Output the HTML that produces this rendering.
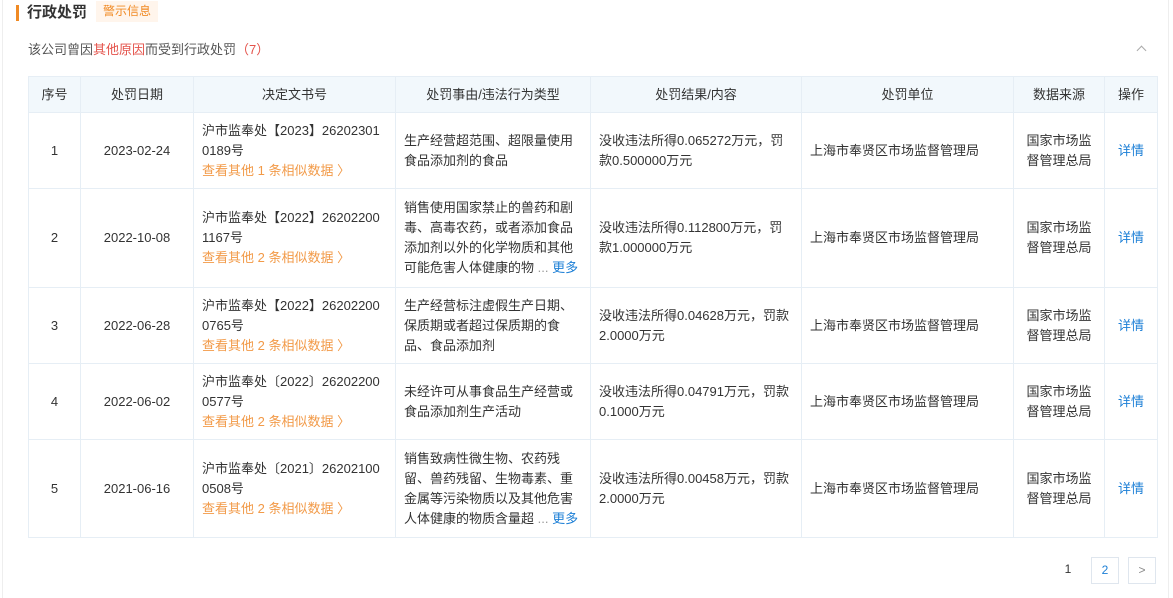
<!DOCTYPE html>
<html><head><meta charset="utf-8">
<style>
*{margin:0;padding:0;box-sizing:border-box}
body{width:1173px;height:592px;overflow:hidden;background:#fff;font-family:"Liberation Sans","Noto Sans CJK SC",sans-serif;font-size:13px;color:#333;position:relative}
.frame{position:absolute;left:2px;top:-2px;width:1167px;height:600px;border-left:1px solid #eee;border-right:1px solid #eee}
.bar{position:absolute;left:16px;top:5px;width:3px;height:16px;background:#f08a24}
.title{position:absolute;left:27px;top:3px;font-size:15px;font-weight:bold;color:#333;line-height:20px}
.tag{position:absolute;left:96px;top:1px;height:21px;line-height:20px;padding:0 7px;font-size:12px;color:#f08a24;background:#fff5ec}
.sub{position:absolute;left:28px;top:41px;line-height:18px;color:#555}
.sub .r{color:#e4534b}
.caret{position:absolute;left:1138px;top:47px;width:7px;height:7px;border-left:1px solid #aaa;border-top:1px solid #aaa;transform:rotate(45deg)}
table{position:absolute;left:28px;top:76px;width:1129px;border-collapse:collapse;table-layout:fixed}
td,th{border:1px solid #e6eef5;line-height:20px;padding:0 8px;vertical-align:middle}
th{background:#f2f8fc;font-weight:normal;height:36px;text-align:center;color:#333}
td.c{text-align:center}
a{color:#1c7fd6;text-decoration:none}
.o{color:#f29a48}
.more{color:#1c7fd6}
.pg{position:absolute;top:557px;height:27px;line-height:25px;text-align:center;font-size:12px}
</style></head><body>
<div class="frame"></div>
<div class="bar"></div>
<div class="title">行政处罚</div>
<div class="tag">警示信息</div>
<div class="sub">该公司曾因<span class="r">其他原因</span>而受到行政处罚<span class="r">（7）</span></div>
<div class="caret"></div>
<table>
<colgroup><col style="width:52px"><col style="width:113px"><col style="width:202px"><col style="width:195px"><col style="width:211px"><col style="width:212px"><col style="width:91px"><col style="width:53px"></colgroup>
<tr><th>序号</th><th>处罚日期</th><th>决定文书号</th><th>处罚事由/违法行为类型</th><th>处罚结果/内容</th><th>处罚单位</th><th>数据来源</th><th>操作</th></tr>
<tr style="height:76px"><td class="c">1</td><td class="c">2023-02-24</td><td>沪市监奉处【2023】26202301<br>0189号<br><span class="o">查看其他 1 条相似数据 〉</span></td><td>生产经营超范围、超限量使用食品添加剂的食品</td><td>没收违法所得0.065272万元，罚款0.500000万元</td><td>上海市奉贤区市场监督管理局</td><td class="c">国家市场监督管理总局</td><td class="c"><a>详情</a></td></tr>
<tr style="height:99px"><td class="c">2</td><td class="c">2022-10-08</td><td>沪市监奉处【2022】26202200<br>1167号<br><span class="o">查看其他 2 条相似数据 〉</span></td><td>销售使用国家禁止的兽药和剧毒、高毒农药，或者添加食品添加剂以外的化学物质和其他可能危害人体健康的物 <span style="color:#999">...</span> <span class="more">更多</span></td><td>没收违法所得0.112800万元，罚款1.000000万元</td><td>上海市奉贤区市场监督管理局</td><td class="c">国家市场监督管理总局</td><td class="c"><a>详情</a></td></tr>
<tr style="height:76px"><td class="c">3</td><td class="c">2022-06-28</td><td>沪市监奉处【2022】26202200<br>0765号<br><span class="o">查看其他 2 条相似数据 〉</span></td><td>生产经营标注虚假生产日期、保质期或者超过保质期的食品、食品添加剂</td><td>没收违法所得0.04628万元，罚款2.0000万元</td><td>上海市奉贤区市场监督管理局</td><td class="c">国家市场监督管理总局</td><td class="c"><a>详情</a></td></tr>
<tr style="height:76px"><td class="c">4</td><td class="c">2022-06-02</td><td>沪市监奉处〔2022〕26202200<br>0577号<br><span class="o">查看其他 2 条相似数据 〉</span></td><td>未经许可从事食品生产经营或食品添加剂生产活动</td><td>没收违法所得0.04791万元，罚款0.1000万元</td><td>上海市奉贤区市场监督管理局</td><td class="c">国家市场监督管理总局</td><td class="c"><a>详情</a></td></tr>
<tr style="height:98px"><td class="c">5</td><td class="c">2021-06-16</td><td>沪市监奉处〔2021〕26202100<br>0508号<br><span class="o">查看其他 2 条相似数据 〉</span></td><td>销售致病性微生物、农药残留、兽药残留、生物毒素、重金属等污染物质以及其他危害人体健康的物质含量超 <span style="color:#999">...</span> <span class="more">更多</span></td><td>没收违法所得0.00458万元，罚款2.0000万元</td><td>上海市奉贤区市场监督管理局</td><td class="c">国家市场监督管理总局</td><td class="c"><a>详情</a></td></tr>
</table>
<div class="pg" style="left:1056px;width:24px;color:#333">1</div>
<div class="pg" style="left:1091px;width:28px;border:1px solid #dfe6ee;color:#1c7fd6">2</div>
<div class="pg" style="left:1128px;width:28px;border:1px solid #dfe6ee;color:#888">&gt;</div>
</body></html>
